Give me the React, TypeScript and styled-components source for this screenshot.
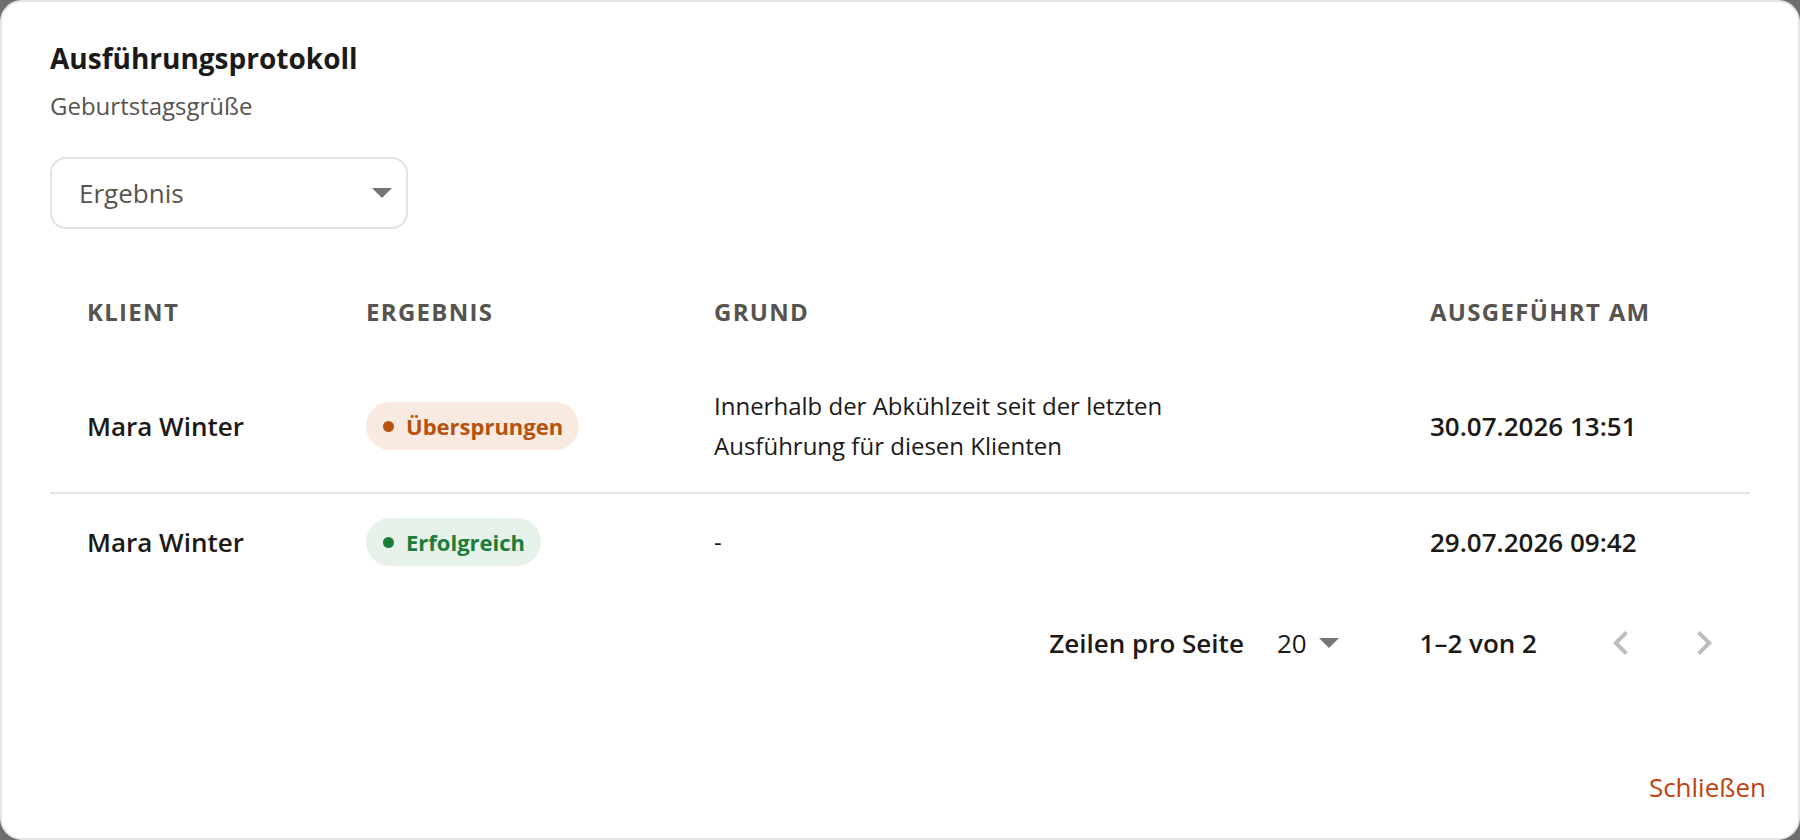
import { createGlobalStyle } from "styled-components";
import styled from "styled-components";

const GlobalStyle = createGlobalStyle`
  html, body {
    margin: 0;
    padding: 0;
    height: 100%;
    background: #6e6e6e;
  }
  body {
    font-family: "Open Sans", "Noto Sans", sans-serif;
    color: #1c1917;
  }
  * {
    box-sizing: border-box;
  }
`;

const Dialog = styled.div`
  height: 100vh;
  background: #fff;
  border: 2px solid #e6e6e6;
  border-radius: 22px;
  display: flex;
  flex-direction: column;
  padding: 38px 48px 0;
`;

const Title = styled.h2`
  margin: 0;
  font-size: 28px;
  line-height: 36px;
  font-weight: 700;
  color: #1a1a1a;
`;

const Subtitle = styled.div`
  margin-top: 16px;
  font-size: 24px;
  line-height: 28px;
  color: #57534e;
`;

const SelectBox = styled.div`
  margin-top: 37px;
  width: 358px;
  height: 72px;
  border: 2px solid #e2e2e2;
  border-radius: 16px;
  display: flex;
  align-items: center;
  justify-content: space-between;
  padding: 0 14px 0 27px;
  font-size: 26px;
  color: #57534e;
`;

const Table = styled.div`
  margin-top: 34px;
  display: flex;
  flex-direction: column;
`;

const Row = styled.div<{ $height: number; $divider?: boolean }>`
  display: grid;
  grid-template-columns: 279px 348px 716px 1fr;
  align-items: center;
  height: ${({ $height }) => $height}px;
  border-bottom: ${({ $divider }) => ($divider ? "2px solid #e4e4e4" : "none")};
  box-sizing: content-box;
`;

const HeadCell = styled.div`
  padding: 0 37px;
  font-size: 24px;
  font-weight: 700;
  letter-spacing: 1.3px;
  text-transform: uppercase;
  color: #57534e;
  white-space: nowrap;
`;

const Cell = styled.div<{ $weight?: number; $size?: number }>`
  padding: 0 37px;
  font-size: ${({ $size }) => $size ?? 26}px;
  line-height: 40px;
  font-weight: ${({ $weight }) => $weight ?? 500};
  color: #1c1917;
`;

const Reason = styled.div`
  max-width: 470px;
`;

const tones = {
  skipped: { bg: "#f8eae0", fg: "#b5520e" },
  success: { bg: "#e6f2e9", fg: "#1c7d3b" },
};

const Badge = styled.span<{ $tone: keyof typeof tones }>`
  display: inline-flex;
  align-items: center;
  gap: 12px;
  height: 48px;
  padding: 0 16px 0 17px;
  border-radius: 24px;
  background: ${({ $tone }) => tones[$tone].bg};
  color: ${({ $tone }) => tones[$tone].fg};
  font-size: 22px;
  font-weight: 700;
  &::before {
    content: "";
    width: 11px;
    height: 11px;
    border-radius: 50%;
    background: currentColor;
  }
`;

const Pagination = styled.div`
  height: 106px;
  display: flex;
  align-items: center;
  justify-content: flex-end;
  padding-right: 22px;
  font-size: 26px;
  color: #1c1917;
`;

const PageLabel = styled.span`
  font-weight: 600;
`;

const PageSize = styled.span`
  display: inline-flex;
  align-items: center;
  gap: 12px;
  margin-left: 33px;
  font-weight: 400;
`;

const PageRange = styled.span`
  margin-left: 81px;
  font-weight: 600;
`;

const NavButton = styled.button<{ $gap: number }>`
  width: 48px;
  height: 48px;
  padding: 0;
  margin-left: ${({ $gap }) => $gap}px;
  border: none;
  background: none;
  display: flex;
  align-items: center;
  justify-content: center;
  color: #bdbdbd;
  svg {
    width: 48px;
    height: 48px;
    fill: currentColor;
  }
`;

const Footer = styled.div`
  margin-top: auto;
  display: flex;
  justify-content: flex-end;
  margin-right: -32px;
  padding-bottom: 27px;
`;

const CloseButton = styled.button`
  border: none;
  background: none;
  padding: 10px 16px;
  font-family: inherit;
  font-size: 26px;
  font-weight: 500;
  color: #c2410c;
  line-height: 28px;
`;

const Caret = ({ width = 20 }: { width?: number }) => (
  <svg width={width} height={width / 2} viewBox="7 10 10 5" fill="#757575">
    <path d="M7 10l5 5 5-5z" />
  </svg>
);

const rows = [
  {
    client: "Mara Winter",
    status: "skipped" as const,
    label: "Übersprungen",
    reason: "Innerhalb der Abkühlzeit seit der letzten Ausführung für diesen Klienten",
    at: "30.07.2026 13:51",
    height: 132,
  },
  {
    client: "Mara Winter",
    status: "success" as const,
    label: "Erfolgreich",
    reason: "-",
    at: "29.07.2026 09:42",
    height: 96,
  },
];

export default function App() {
  return (
    <>
      <GlobalStyle />
      <Dialog>
        <Title>Ausführungsprotokoll</Title>
        <Subtitle>Geburtstagsgrüße</Subtitle>

        <SelectBox>
          <span>Ergebnis</span>
          <Caret />
        </SelectBox>

        <Table>
          <Row $height={97}>
            <HeadCell>Klient</HeadCell>
            <HeadCell>Ergebnis</HeadCell>
            <HeadCell>Grund</HeadCell>
            <HeadCell>Ausgeführt am</HeadCell>
          </Row>
          {rows.map((r, i) => (
            <Row key={i} $height={r.height} $divider={i < rows.length - 1}>
              <Cell $weight={600}>{r.client}</Cell>
              <Cell>
                <Badge $tone={r.status}>{r.label}</Badge>
              </Cell>
              <Cell $size={24}>
                <Reason>{r.reason}</Reason>
              </Cell>
              <Cell $weight={600}>{r.at}</Cell>
            </Row>
          ))}
        </Table>

        <Pagination>
          <PageLabel>Zeilen pro Seite</PageLabel>
          <PageSize>
            20
            <Caret />
          </PageSize>
          <PageRange>1–2 von 2</PageRange>
          <NavButton $gap={60} aria-label="Vorherige Seite">
            <svg viewBox="0 0 24 24">
              <path d="M15.41 7.41 14 6l-6 6 6 6 1.41-1.41L10.83 12z" />
            </svg>
          </NavButton>
          <NavButton $gap={35} aria-label="Nächste Seite">
            <svg viewBox="0 0 24 24">
              <path d="M10 6 8.59 7.41 13.17 12l-4.58 4.59L10 18l6-6z" />
            </svg>
          </NavButton>
        </Pagination>

        <Footer>
          <CloseButton>Schließen</CloseButton>
        </Footer>
      </Dialog>
    </>
  );
}
